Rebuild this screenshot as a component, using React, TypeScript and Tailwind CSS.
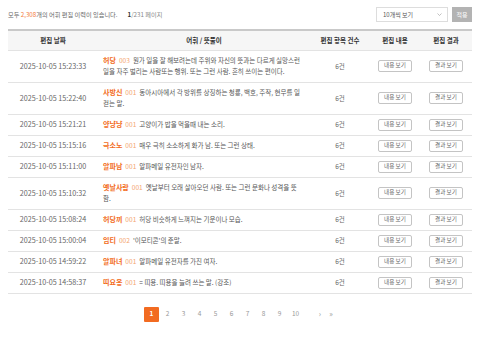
import React from 'react';

type Row = { date: string; word: string; no: string; def: string };

const rows: Row[] = [
  { date: '2025-10-05 15:23:33', word: '허당', no: '003', def: '뭔가 일을 잘 해보려는데 주위와 자신의 뜻과는 다르게 실망스런 일을 자주 벌리는 사람또는 행위. 또는 그런 사람. 흔히 쓰이는 편이다.' },
  { date: '2025-10-05 15:22:40', word: '사방신', no: '001', def: '동아시아에서 각 방위를 상징하는 청룡, 백호, 주작, 현무를 일컫는 말.' },
  { date: '2025-10-05 15:21:21', word: '양냥냥', no: '001', def: '고양이가 밥을 먹을때 내는 소리.' },
  { date: '2025-10-05 15:15:16', word: '극소노', no: '001', def: '매우 극히 소소하게 화가 남. 또는 그런 상태.' },
  { date: '2025-10-05 15:11:00', word: '알파남', no: '001', def: '알파메일 유전자인 남자.' },
  { date: '2025-10-05 15:10:32', word: '옛날사람', no: '001', def: '옛날부터 오래 살아오던 사람. 또는 그런 문화나 성격을 뜻함.' },
  { date: '2025-10-05 15:08:24', word: '허당끼', no: '001', def: '허당 비슷하게 느껴지는 기운이나 모습.' },
  { date: '2025-10-05 15:00:04', word: '임티', no: '002', def: "'이모티콘'의 준말." },
  { date: '2025-10-05 14:59:22', word: '알파녀', no: '001', def: '알파메일 유전자를 가진 여자.' },
  { date: '2025-10-05 14:58:37', word: '띠요옹', no: '001', def: '= 띠용. 띠용을 늘려 쓰는 말. (강조)' },
];

function SmallButton({ label }: { label: string }) {
  return (
    <div className="flex justify-center">
      <button className="block h-[12px] w-[34px] rounded-[2px] border border-[#c4c4c4] bg-white text-[5.6px] leading-none text-[#666]">
        {label}
      </button>
    </div>
  );
}

export default function App() {
  return (
    <div className="min-h-[337px] w-[480px] bg-white px-[8px] pt-[7px] font-['Noto_Sans_CJK_KR',sans-serif]">
      <div className="flex h-[15px] items-center justify-between">
        <div className="text-[6.2px] text-[#666]">
          모두 <span className="text-[#f37a3a]">2,308</span>개의 어휘 편집 이력이 있습니다.
          <span className="ml-[10px] font-bold text-[#333]">1</span>
          <span className="text-[#888]">/231 페이지</span>
        </div>
        <div className="flex items-center gap-[4px]">
          <div className="flex h-[15px] w-[72px] items-center justify-between border border-[#ddd] bg-white pl-[6px] pr-[5px] text-[6px] text-[#555]">
            <span>10개씩 보기</span>
            <svg width="5" height="3" viewBox="0 0 5 3">
              <path d="M0.5 0.5 L2.5 2.5 L4.5 0.5" fill="none" stroke="#999" strokeWidth="0.6" />
            </svg>
          </div>
          <button className="h-[15px] w-[20px] bg-[#b3b3b3] text-[6px] text-white">적용</button>
        </div>
      </div>

      <table className="mt-[7px] w-full table-fixed border-collapse text-[6.5px] leading-[11px]">
        <colgroup>
          <col className="w-[90px]" />
          <col className="w-[212px]" />
          <col className="w-[60px]" />
          <col className="w-[50px]" />
          <col className="w-[52px]" />
        </colgroup>
        <thead>
          <tr className="h-[20px] border-t-2 border-b border-t-[#c9c9c9] border-b-[#e3e3e3] bg-[#f6f6f6] font-bold text-[#333]">
            <th className="font-bold">편집 날짜</th>
            <th className="font-bold">어휘 / 뜻풀이</th>
            <th className="font-bold">편집 항목 건수</th>
            <th className="font-bold">편집 내용</th>
            <th className="font-bold">편집 결과</th>
          </tr>
        </thead>
        <tbody>
          {rows.map((r) => (
            <tr key={r.date} className="h-[20px] border-b border-[#e3e3e3]">
              <td className="py-[4.5px] text-center text-[7.2px] text-[#666]">{r.date}</td>
              <td className="py-[4.5px] pl-[5px] pr-[7px] text-[#555]">
                <span className="text-[7px] font-bold text-[#f26b21]">{r.word}</span>
                <span className="ml-[3px] text-[6.6px] text-[#f4a46f]">{r.no}</span>
                <span className="ml-[3px]">{r.def}</span>
              </td>
              <td className="py-[4.5px] text-center text-[#666]">6건</td>
              <td className="py-[4px]">
                <SmallButton label="내용 보기" />
              </td>
              <td className="py-[4px]">
                <SmallButton label="결과 보기" />
              </td>
            </tr>
          ))}
        </tbody>
      </table>

      <div className="mt-[13px] flex items-center justify-center text-[6.5px] text-[#999]">
        <div className="flex items-center gap-px">
          <span className="flex h-[15px] w-[15px] items-center justify-center rounded-[1px] bg-[#f26b21] font-bold text-white">1</span>
          {['2', '3', '4', '5', '6', '7', '8', '9', '10'].map((n) => (
            <span key={n} className="flex h-[15px] w-[15px] items-center justify-center">
              {n}
            </span>
          ))}
        </div>
        <span className="ml-[12px] flex h-[15px] w-[10px] items-center justify-center text-[7.5px]">›</span>
        <span className="ml-px flex h-[15px] w-[10px] items-center justify-center text-[7.5px]">»</span>
      </div>
    </div>
  );
}
